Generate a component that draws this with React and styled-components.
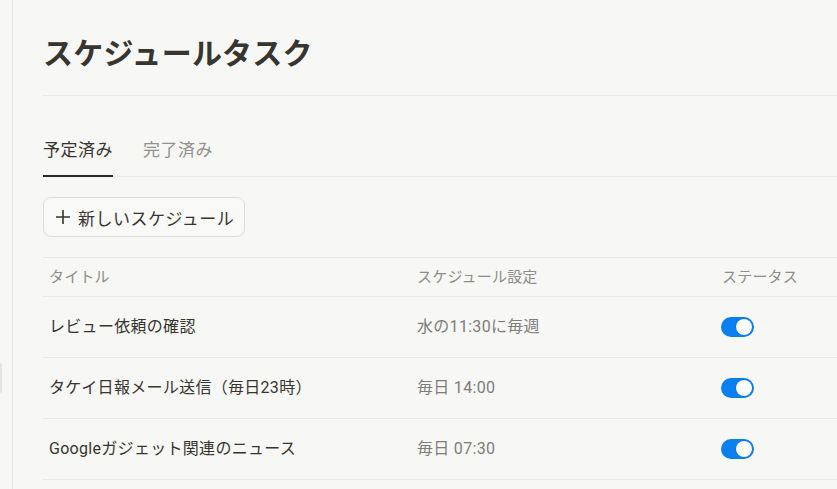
import React from "react";
import styled, { createGlobalStyle } from "styled-components";

const Global = createGlobalStyle`
  html, body { margin: 0; padding: 0; background: #f7f7f5; overflow: hidden; }
  body { font-family: Roboto, "Noto Sans CJK JP", sans-serif; color: #37352f; }
`;

const Shell = styled.div`
  display: flex;
  width: 1100px;
  height: 489px;
`;

const Sidebar = styled.aside`
  position: relative;
  width: 12px;
  flex: none;
  border-right: 1px solid #e6e6e4;
  background: #f7f7f5;
`;

const Handle = styled.div`
  position: absolute;
  left: 0;
  top: 363px;
  width: 2px;
  height: 30px;
  background: #e4e4e2;
  border-radius: 0 2px 2px 0;
`;

const Main = styled.main`
  flex: 1;
  padding: 36px 0 0 30px;
  display: flex;
  flex-direction: column;
`;

const Title = styled.h1`
  margin: 0;
  font-size: 30px;
  line-height: 36px;
  font-weight: 700;
  color: #37352f;
  letter-spacing: 0.2px;
`;

const Divider = styled.hr`
  margin: 23px 0 0;
  border: 0;
  border-top: 1px solid #e9e9e7;
`;

const Tabs = styled.div`
  display: flex;
  gap: 30px;
  margin-top: 42px;
  border-bottom: 1px solid #e9e9e7;
`;

const Tab = styled.div`
  font-size: 17px;
  line-height: 25px;
  letter-spacing: 0.5px;
  padding-bottom: 12px;
  color: ${(p) => (p.$active ? "#37352f" : "#91918e")};
  border-bottom: 2px solid ${(p) => (p.$active ? "#2a2a28" : "transparent")};
  margin-bottom: -1px;
`;

const Toolbar = styled.div`
  display: flex;
  margin-top: 20px;
`;

const NewButton = styled.button`
  display: flex;
  align-items: center;
  gap: 7px;
  height: 40px;
  box-sizing: border-box;
  padding: 0 10px 0 11px;
  border: 1px solid #dcdcd9;
  border-radius: 8px;
  background: #f9f9f8;
  font-family: Roboto, "Noto Sans CJK JP", sans-serif;
  font-size: 17px;
  letter-spacing: 0.5px;
  color: #37352f;
`;

const Table = styled.div`
  margin-top: 20px;
  border-top: 1px solid #e9e9e7;
`;

const Row = styled.div`
  display: grid;
  grid-template-columns: 368px 305px 1fr;
  align-items: center;
  height: ${(p) => (p.$head ? "35px" : "56px")};
  padding-bottom: ${(p) => (p.$head ? "3px" : "4px")};
  border-bottom: 1px solid #e9e9e7;
  box-sizing: content-box;
`;

const HeadCell = styled.div`
  padding: 0 6px;
  font-size: 15px;
  letter-spacing: 0.2px;
  color: #8d8d8a;
`;

const Cell = styled.div`
  padding: ${(p) => (p.$control ? "4px 6px 0" : "0 6px")};
  font-size: 16px;
  letter-spacing: 0.3px;
  color: ${(p) => (p.$muted ? "#7d7d7a" : "#37352f")};
`;

const Toggle = styled.div`
  position: relative;
  width: 33px;
  height: 20px;
  border-radius: 10px;
  background: #0a7ff0;
  margin-left: -1px;
`;

const Knob = styled.div`
  position: absolute;
  top: 2px;
  right: 2px;
  width: 16px;
  height: 16px;
  border-radius: 50%;
  background: #fff;
  box-shadow: 0 0 0 0.5px rgba(0, 60, 140, 0.3);
`;

const rows = [
  { title: "レビュー依頼の確認", schedule: "水の11:30に毎週" },
  { title: "タケイ日報メール送信（毎日23時）", schedule: "毎日 14:00" },
  { title: "Googleガジェット関連のニュース", schedule: "毎日 07:30" },
];

export default function App() {
  return (
    <>
      <Global />
      <Shell>
        <Sidebar>
          <Handle />
        </Sidebar>
        <Main>
          <Title>スケジュールタスク</Title>
          <Divider />
          <Tabs>
            <Tab $active>予定済み</Tab>
            <Tab>完了済み</Tab>
          </Tabs>
          <Toolbar>
            <NewButton>
              <svg width="16" height="16" viewBox="0 0 16 16" fill="none" stroke="#37352f" strokeWidth="1.6">
                <path d="M8 1v14M1 8h14" />
              </svg>
              新しいスケジュール
            </NewButton>
          </Toolbar>
          <Table>
            <Row $head>
              <HeadCell>タイトル</HeadCell>
              <HeadCell>スケジュール設定</HeadCell>
              <HeadCell>ステータス</HeadCell>
            </Row>
            {rows.map((r) => (
              <Row key={r.title}>
                <Cell>{r.title}</Cell>
                <Cell $muted>{r.schedule}</Cell>
                <Cell $control>
                  <Toggle>
                    <Knob />
                  </Toggle>
                </Cell>
              </Row>
            ))}
          </Table>
        </Main>
      </Shell>
    </>
  );
}
